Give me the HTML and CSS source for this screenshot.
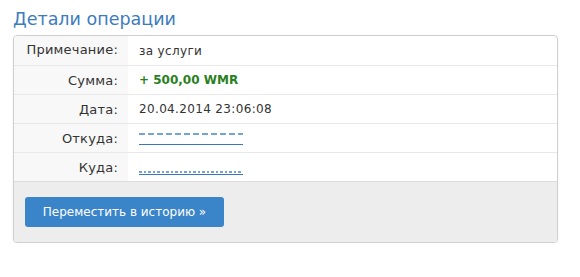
FILE: index.html
```html
<!DOCTYPE html>
<html lang="ru">
<head>
<meta charset="utf-8">
<title>Детали операции</title>
<link rel="stylesheet" href="styles.css">
</head>
<body>
<div class="page">
  <h1 class="title">Детали операции</h1>
  <div class="panel">
    <div class="rows">
      <div class="row first">
        <div class="label">Примечание:</div>
        <div class="value">за услуги</div>
      </div>
      <div class="row">
        <div class="label">Сумма:</div>
        <div class="value amount">+ 500,00 WMR</div>
      </div>
      <div class="row">
        <div class="label">Дата:</div>
        <div class="value">20.04.2014 23:06:08</div>
      </div>
      <div class="row">
        <div class="label">Откуда:</div>
        <div class="value"><a class="wallet wallet-top" href="#" aria-label="кошелёк отправителя"><span class="mask"></span></a></div>
      </div>
      <div class="row">
        <div class="label">Куда:</div>
        <div class="value"><a class="wallet wallet-bottom" href="#" aria-label="кошелёк получателя"><span class="mask"></span></a></div>
      </div>
    </div>
    <div class="footer">
      <button class="btn" type="button">Переместить в историю »</button>
    </div>
  </div>
</div>
</body>
</html>
```
FILE: styles.css
```css
html, body {
  margin: 0;
  padding: 0;
  background: #ffffff;
}
body {
  font-family: "DejaVu Sans", Verdana, sans-serif;
  color: #333333;
}
.page {
  padding: 0 22px 0 13px;
}
.title {
  margin: 0;
  padding-top: 7px;
  height: 35px;
  font-size: 17.5px;
  font-weight: normal;
  color: #3c7cbd;
  line-height: 24px;
  box-sizing: border-box;
}
.panel {
  border: 1px solid #cfcfcf;
  border-radius: 4px;
  box-shadow: 0 1px 2px rgba(0,0,0,0.08);
  overflow: hidden;
}
.row {
  display: flex;
  height: 28px;
  border-top: 1px solid #e8e8e8;
}
.row.first {
  border-top: none;
  height: 29px;
}
.label {
  width: 114px;
  flex: none;
  background: #f8f8f8;
  text-align: right;
  font-size: 13px;
  letter-spacing: 0.2px;
  line-height: 29px;
  color: #333333;
  padding-right: 10px;
  box-sizing: border-box;
}
.row.first .label { line-height: 28px; }
.value {
  padding-left: 11px;
  font-size: 12px;
  letter-spacing: 0.35px;
  line-height: 28px;
  color: #333333;
  display: flex;
  align-items: center;
}
.amount {
  color: #2a7f1e;
  font-weight: bold;
  font-size: 12px;
  letter-spacing: 0;
}
.wallet {
  display: flex;
  flex-direction: column;
  width: 104px;
  border-bottom: 1px solid #3a78b5;
  text-decoration: none;
}
.wallet .mask {
  display: block;
  height: 2px;
  background: repeating-linear-gradient(90deg, #5f93c9 0 6px, transparent 6px 9px);
  opacity: 0.85;
}
.wallet-top {
  margin-top: 2px;
}
.wallet-top .mask {
  margin-bottom: 9px;
}
.wallet-bottom {
  margin-top: 12px;
}
.wallet-bottom .mask {
  height: 2px;
  margin-bottom: 1px;
  background: repeating-linear-gradient(90deg, #5f93c9 0 3px, transparent 3px 5px, #5f93c9 5px 7px, transparent 7px 9px);
}
.footer {
  border-top: 1px solid #dcdcdc;
  background: #ededed;
  padding: 15px 11px 15px;
  height: 61px;
  box-sizing: border-box;
}
.btn {
  display: block;
  width: 199px;
  height: 30px;
  border: none;
  border-radius: 3px;
  background: #3a84c9;
  color: #ffffff;
  font-family: "DejaVu Sans", Verdana, sans-serif;
  font-size: 12px;
  padding: 0;
  cursor: pointer;
}
```
